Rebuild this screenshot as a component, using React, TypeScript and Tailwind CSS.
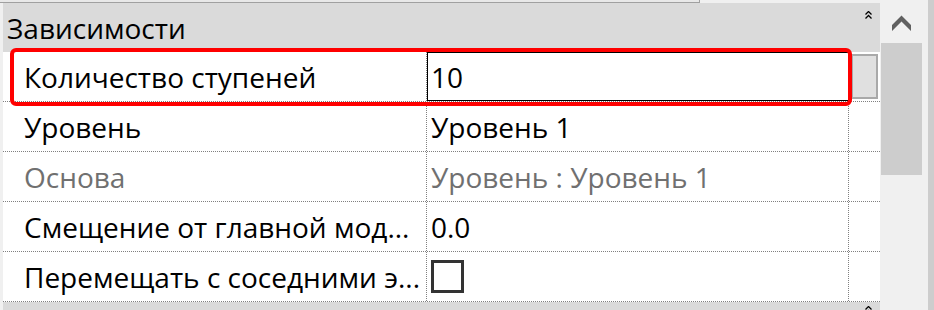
import React from "react";

const font = { fontFamily: '"Open Sans", "Noto Sans", sans-serif' };

type Row = { label: string; value?: string; muted?: boolean; checkbox?: boolean };

const rows: Row[] = [
  { label: "Уровень", value: "Уровень 1" },
  { label: "Основа", value: "Уровень : Уровень 1", muted: true },
  { label: "Смещение от главной мод...", value: "0.0" },
  { label: "Перемещать с соседними э...", checkbox: true },
];

function DoubleUp() {
  return (
    <svg width="7" height="8" viewBox="0 0 7 8" className="block">
      <path d="M0.5 3.5 L3.5 0.5 L6.5 3.5 M0.5 7.5 L3.5 4.5 L6.5 7.5" fill="none" stroke="#000" strokeWidth="1.3" />
    </svg>
  );
}

export default function App() {
  return (
    <div className="relative flex h-[310px] w-[934px] overflow-hidden bg-[#f0f0f0] text-[28px] text-black" style={font}>
      {/* top strip */}
      <div className="absolute left-0 top-0 h-[3px] w-[700px] border-b border-r border-[#a0a0a0] bg-[#e8e8e8]" />

      {/* property grid */}
      <div className="flex w-[880px] flex-col pl-[3px] pt-[3px]">
        <div className="flex h-[49px] shrink-0 items-center justify-between bg-[#dadada] pl-1 pr-[8px]">
          <span className="leading-none">Зависимости</span>
          <span className="-mt-[26px]"><DoubleUp /></span>
        </div>

        {/* Количество ступеней */}
        <div className="flex h-[50px] shrink-0 border-b border-dotted border-[#808080] bg-white">
          <div className="flex w-[424px] items-center border-r border-dotted border-[#808080] pl-[21px]">Количество ступеней</div>
          <div className="flex w-[422px] items-center border border-black pl-[3px]">10</div>
          <div className="flex flex-1 p-[2px] pl-[2px]">
            <div className="flex-1 border-2 border-[#a9a9a9] bg-[#e0e0e0]" />
          </div>
        </div>

        {rows.map((r) => (
          <div key={r.label} className="flex h-[50px] shrink-0 border-b border-dotted border-[#808080] bg-white">
            <div className={`flex w-[424px] items-center whitespace-nowrap border-r border-dotted border-[#808080] pl-[21px] ${r.muted ? "text-[#707070]" : ""}`}>
              {r.label}
            </div>
            <div className={`flex w-[422px] items-center whitespace-nowrap border-r border-dotted border-[#808080] pl-[4px] ${r.muted ? "text-[#707070]" : ""}`}>
              {r.checkbox ? <div className="h-[33px] w-[33px] border-[3px] border-[#333]" /> : r.value}
            </div>
            <div className="flex-1" />
          </div>
        ))}

        <div className="flex flex-1 justify-end bg-[#dadada] pr-[8px] pt-[4px]">
          <DoubleUp />
        </div>
      </div>

      {/* scrollbar */}
      <div className="flex flex-1 pl-[1px]">
        <div className="flex w-[41px] flex-col">
          <div className="flex h-[43px] items-end justify-center pb-[12px]">
            <svg width="19" height="16" viewBox="0 0 19 16">
              <path d="M0 10 L9.5 0.5 L19 10 L19 16 L9.5 6.5 L0 16 Z" fill="#606060" />
            </svg>
          </div>
          <div className="h-[132px] bg-[#cdcdcd]" />
        </div>
        <div className="flex-1" />
        <div className="w-[6px] bg-[#cdcdcd]" />
      </div>

      {/* selection outline */}
      <div className="pointer-events-none absolute left-[10px] top-[48px] h-[58px] w-[842px] rounded-[6px] border-4 border-[#ff0000]" />
    </div>
  );
}
